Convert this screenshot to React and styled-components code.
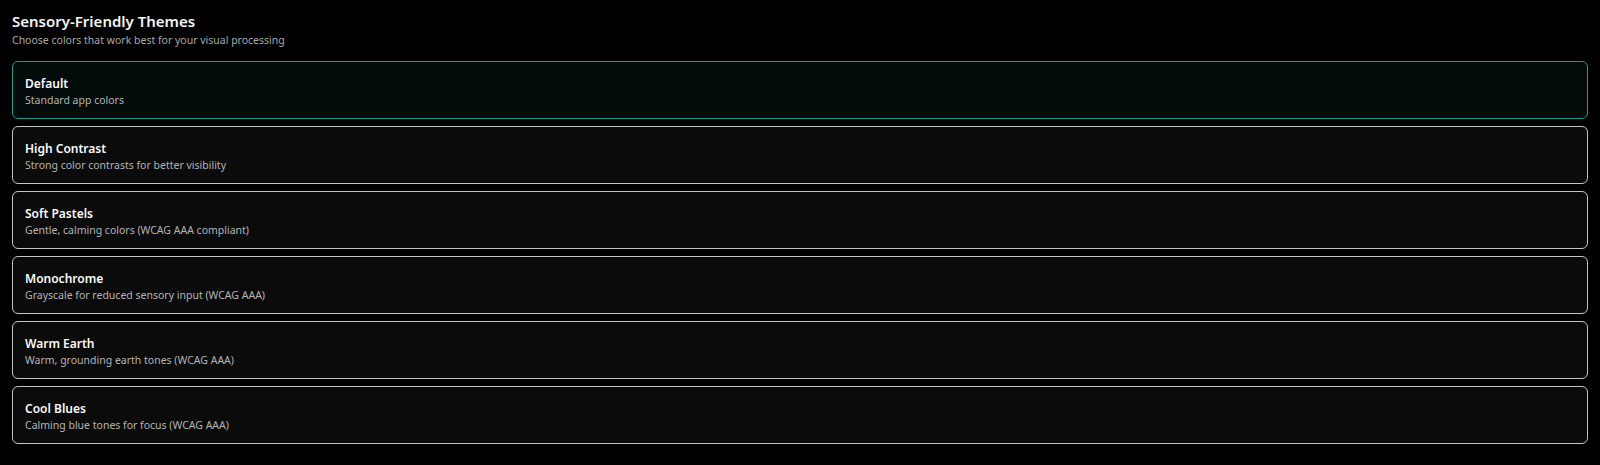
import React, { useState } from "react";
import styled, { createGlobalStyle } from "styled-components";

const GlobalStyle = createGlobalStyle`
  body {
    margin: 0;
    background: #000;
    font-family: "Noto Sans", "Open Sans", sans-serif;
  }
`;

const Page = styled.div`
  padding: 11px 12px 0;
  background: #000;
  min-height: 465px;
  box-sizing: border-box;
`;

const Title = styled.h2`
  margin: 0;
  font-size: 15px;
  line-height: 20px;
  font-weight: 600;
  color: #f5f5f5;
`;

const Subtitle = styled.p`
  margin: 1px 0 13px;
  font-size: 10.5px;
  line-height: 16px;
  color: #a8a8a8;
`;

const List = styled.div`
  display: flex;
  flex-direction: column;
  gap: 7px;
`;

const Card = styled.button`
  display: flex;
  flex-direction: column;
  align-items: flex-start;
  box-sizing: border-box;
  height: 58px;
  width: 100%;
  padding: 12px 12px 10px;
  border-radius: 6px;
  border: 1px solid ${(p) => (p.$active ? "#14a08e" : "#c4c4c4")};
  background: ${(p) => (p.$active ? "#030b0b" : "#0b0b0b")};
  font-family: inherit;
  text-align: left;
  cursor: pointer;
`;

const CardTitle = styled.div`
  font-size: 12px;
  line-height: 19px;
  font-weight: 600;
  color: #fafafa;
`;

const CardDesc = styled.div`
  font-size: 10.5px;
  line-height: 15px;
  color: #b4b4b4;
`;

const themes = [
  { id: "default", name: "Default", desc: "Standard app colors" },
  { id: "contrast", name: "High Contrast", desc: "Strong color contrasts for better visibility" },
  { id: "pastels", name: "Soft Pastels", desc: "Gentle, calming colors (WCAG AAA compliant)" },
  { id: "mono", name: "Monochrome", desc: "Grayscale for reduced sensory input (WCAG AAA)" },
  { id: "earth", name: "Warm Earth", desc: "Warm, grounding earth tones (WCAG AAA)" },
  { id: "blues", name: "Cool Blues", desc: "Calming blue tones for focus (WCAG AAA)" },
];

export default function App() {
  const [selected, setSelected] = useState("default");
  return (
    <Page>
      <GlobalStyle />
      <Title>Sensory-Friendly Themes</Title>
      <Subtitle>Choose colors that work best for your visual processing</Subtitle>
      <List>
        {themes.map((t) => (
          <Card key={t.id} $active={selected === t.id} onClick={() => setSelected(t.id)}>
            <CardTitle>{t.name}</CardTitle>
            <CardDesc>{t.desc}</CardDesc>
          </Card>
        ))}
      </List>
    </Page>
  );
}
